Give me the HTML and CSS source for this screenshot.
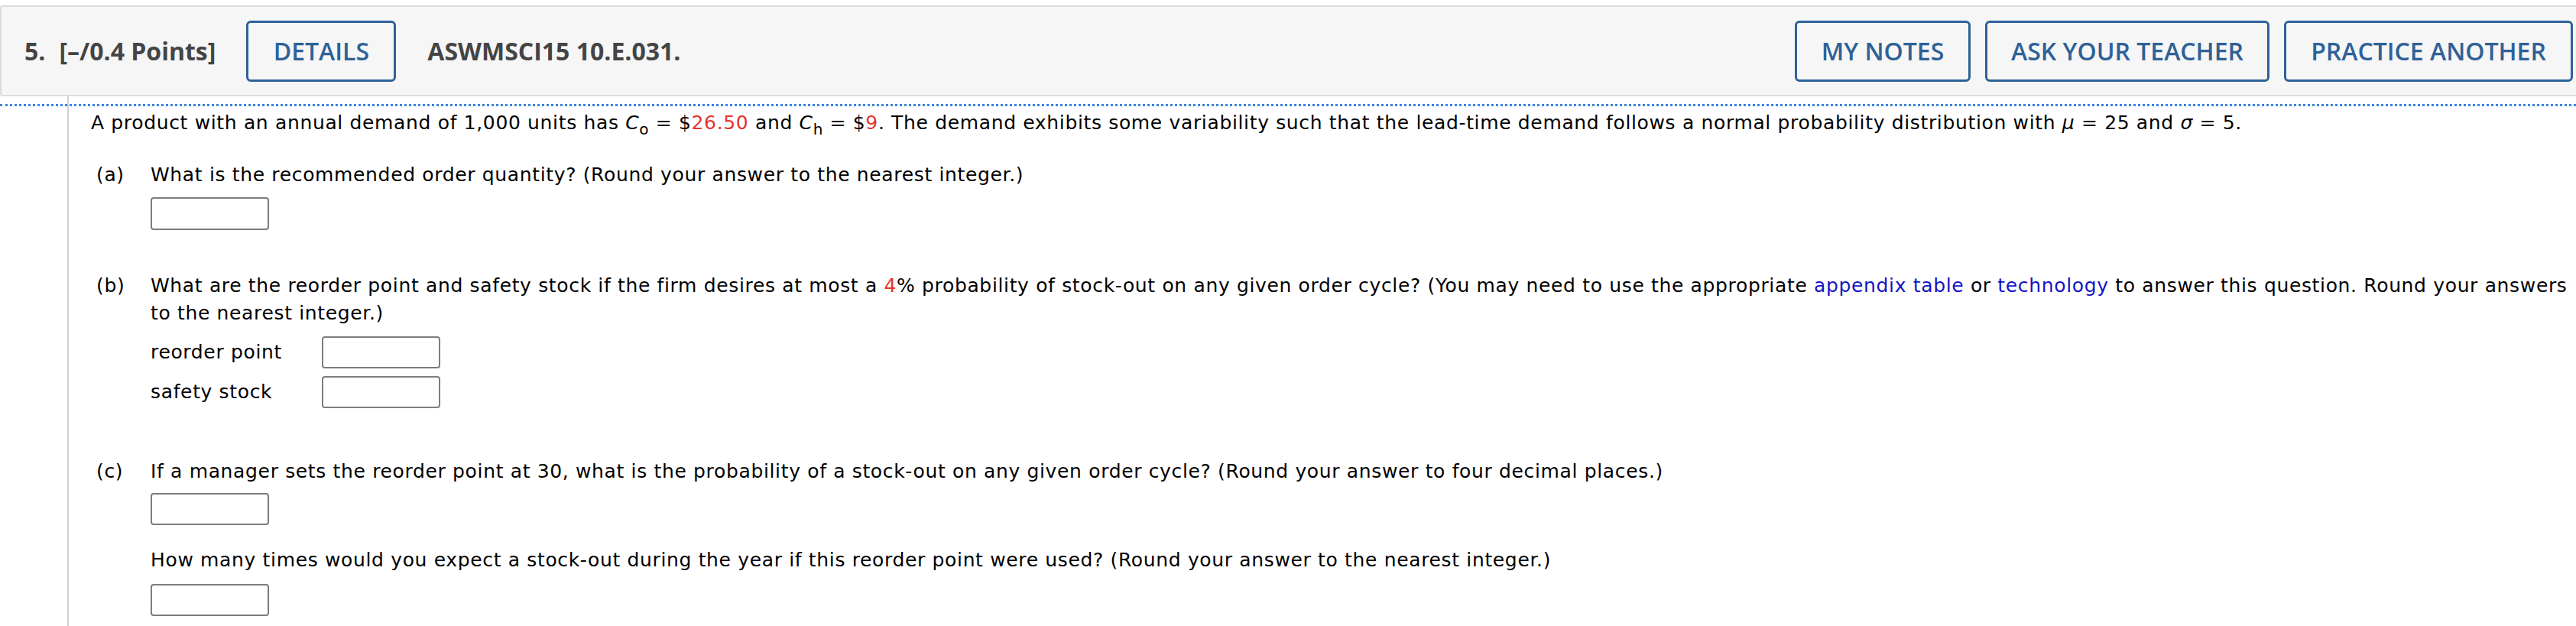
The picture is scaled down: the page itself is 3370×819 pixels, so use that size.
FILE: index.html
```html
<!DOCTYPE html>
<html>
<head>
<meta charset="utf-8">
<link rel="stylesheet" href="styles.css">
</head>
<body>
<div class="question">
  <div class="qhead">
    <span class="qnum">5.</span>
    <span class="qpts">[–/0.4 Points]</span>
    <button class="btn btn-details">DETAILS</button>
    <span class="qid">ASWMSCI15 10.E.031.</span>
    <div class="spacer"></div>
    <div class="actions">
      <button class="btn btn-notes">MY NOTES</button>
      <button class="btn btn-ask">ASK YOUR TEACHER</button>
      <button class="btn btn-practice">PRACTICE ANOTHER</button>
    </div>
  </div>
  <div class="qbody">
    <div class="dots"></div>
    <div class="content">
      <p class="intro">A product with an annual demand of 1,000 units has <i>C</i><sub>o</sub> = $<span class="red">26.50</span> and <i>C</i><sub>h</sub> = $<span class="red">9</span>. The demand exhibits some variability such that the lead-time demand follows a normal probability distribution with <i>μ</i> = 25 and <i>σ</i> = 5.</p>

      <div class="part part-a">
        <span class="plabel">(a)</span>
        <div class="pbody">
          <p class="ptext">What is the recommended order quantity? (Round your answer to the nearest integer.)</p>
          <input class="ans ans-a" type="text">
        </div>
      </div>

      <div class="part part-b">
        <span class="plabel">(b)</span>
        <div class="pbody">
          <p class="ptext">What are the reorder point and safety stock if the firm desires at most a <span class="red">4</span>% probability of stock-out on any given order cycle? (You may need to use the appropriate <a class="link">appendix table</a> or <a class="link">technology</a> to answer this question. Round your answers to the nearest integer.)</p>
          <div class="fields">
            <span class="flabel">reorder point</span><input class="ans" type="text">
            <span class="flabel">safety stock</span><input class="ans" type="text">
          </div>
        </div>
      </div>

      <div class="part part-c">
        <span class="plabel">(c)</span>
        <div class="pbody">
          <p class="ptext">If a manager sets the reorder point at 30, what is the probability of a stock-out on any given order cycle? (Round your answer to four decimal places.)</p>
          <input class="ans ans-c1" type="text">
          <p class="ptext ptext-how">How many times would you expect a stock-out during the year if this reorder point were used? (Round your answer to the nearest integer.)</p>
          <input class="ans ans-c2" type="text">
        </div>
      </div>
    </div>
  </div>
</div>
</body>
</html>
```

FILE: styles.css
```css
html, body {
  margin: 0;
  padding: 0;
  background: #ffffff;
}

body {
  font-family: "DejaVu Sans", Verdana, sans-serif;
  color: #000;
  overflow: hidden;
}

.question {
  width: 100%;
}

.qhead {
  margin-top: 7px;
  box-sizing: border-box;
  height: 119px;
  border: 2px solid #dcdcdc;
  border-right: none;
  border-radius: 3px 0 0 3px;
  background: #f6f6f6;
  display: flex;
  align-items: center;
  padding: 0 4px 0 30px;
  font-family: "Open Sans", sans-serif;
}

.qnum {
  font-size: 32px;
  font-weight: 700;
  color: #444;
  margin-right: 18px;
}

.qpts {
  font-size: 32px;
  font-weight: 700;
  color: #444;
  margin-right: 40px;
}

.qid {
  font-size: 32px;
  font-weight: 700;
  color: #444;
  margin-left: 41px;
}

.spacer {
  flex: 1;
}

.actions {
  display: flex;
  gap: 19px;
}

.btn {
  box-sizing: border-box;
  height: 80px;
  padding: 0;
  border: 3px solid #2e6298;
  border-radius: 6px;
  background: transparent;
  color: #2e6197;
  font-family: "Open Sans", sans-serif;
  font-weight: 600;
  font-size: 32px;
  line-height: 1;
  display: flex;
  align-items: center;
  justify-content: center;
}

.btn-details { width: 196px; }
.btn-notes { width: 230px; }
.btn-ask { width: 372px; }
.btn-practice { width: 378px; }

.qbody {
  background: linear-gradient(#d2d2d2, #d2d2d2) no-repeat 88px 0 / 2px 100%;
  padding-top: 10px;
  min-height: 700px;
}

.dots {
  border-top: 3px dotted #3d82dd;
}

.content {
  padding: 4px 10px 0 119px;
  font-size: 25px;
  letter-spacing: 0.65px;
  line-height: 36px;
}

p {
  margin: 0;
}

.red {
  color: #e3342c;
}

.link {
  color: #1414c4;
  text-decoration: none;
}

sub {
  font-size: 0.8em;
  line-height: 0;
  vertical-align: -0.35em;
}

.part {
  display: flex;
  margin-left: 7px;
}

.plabel {
  width: 71px;
  flex: none;
}

.pbody {
  flex: 1;
}

.part-a {
  margin-top: 32px;
}

.part-b {
  margin-top: 55px;
}

.part-c {
  margin-top: 65px;
}

.ans {
  display: block;
  box-sizing: border-box;
  width: 155px;
  height: 42px;
  border: 2px solid #7d7d7d;
  border-radius: 4px;
  background: #fff;
  margin: 0;
  padding: 0;
}

.ans-a {
  margin-top: 11px;
  height: 43px;
}

.fields {
  display: grid;
  grid-template-columns: 224px auto;
  align-items: center;
  row-gap: 10px;
  margin-top: 12px;
  justify-items: start;
}

.ans-c1 {
  margin-top: 10px;
}

.ptext-how {
  margin-top: 28px;
}

.ans-c2 {
  margin-top: 13px;
}
```
